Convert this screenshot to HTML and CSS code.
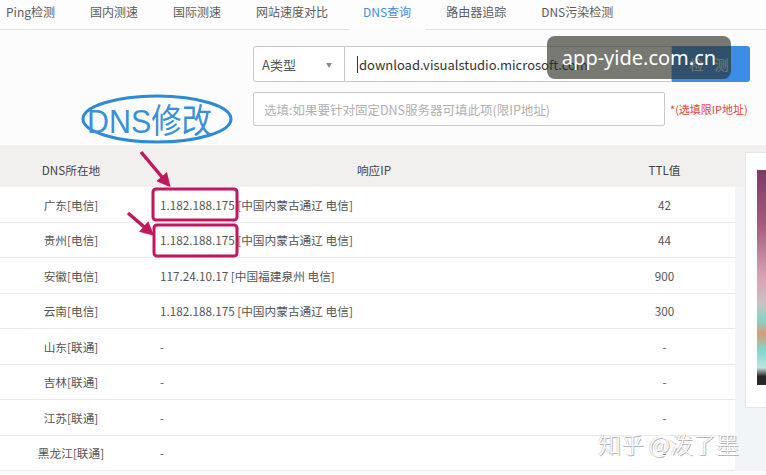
FILE: index.html
```html
<!DOCTYPE html>
<html lang="zh-CN">
<head>
  <meta charset="UTF-8" />
  <meta name="viewport" content="width=device-width, initial-scale=1.0"/>
  <title>DNS查询</title>
  <link rel="stylesheet" href="styles.css">
</head>
<body>
  <nav class="tabs">
    <a class="tab">Ping检测</a>
    <a class="tab">国内测速</a>
    <a class="tab">国际测速</a>
    <a class="tab">网站速度对比</a>
    <a class="tab active">DNS查询</a>
    <a class="tab">路由器追踪</a>
    <a class="tab">DNS污染检测</a>
  </nav>

  <form class="query">
    <div class="query-row">
      <div class="select">A类型<span class="caret">▼</span></div>
      <div class="domain"><span class="cursor"></span>download.visualstudio.microsoft.com</div>
      <button type="button" class="btn">检 测</button>
    </div>
    <div class="query-row">
      <div class="server">选填:如果要针对固定DNS服务器可填此项(限IP地址)</div>
      <span class="hint">*(选填限IP地址)</span>
    </div>
  </form>

  <div class="content">
    <div class="result">
      <div class="result-head">
        <div class="col-loc">DNS所在地</div>
        <div class="col-ip">响应IP</div>
        <div class="col-ttl">TTL值</div>
      </div>
      <div class="result-row">
        <div class="col-loc">广东[电信]</div>
        <div class="col-ip">1.182.188.175 [中国内蒙古通辽 电信]</div>
        <div class="col-ttl">42</div>
      </div>
      <div class="result-row">
        <div class="col-loc">贵州[电信]</div>
        <div class="col-ip">1.182.188.175 [中国内蒙古通辽 电信]</div>
        <div class="col-ttl">44</div>
      </div>
      <div class="result-row">
        <div class="col-loc">安徽[电信]</div>
        <div class="col-ip">117.24.10.17 [中国福建泉州 电信]</div>
        <div class="col-ttl">900</div>
      </div>
      <div class="result-row">
        <div class="col-loc">云南[电信]</div>
        <div class="col-ip">1.182.188.175 [中国内蒙古通辽 电信]</div>
        <div class="col-ttl">300</div>
      </div>
      <div class="result-row">
        <div class="col-loc">山东[联通]</div>
        <div class="col-ip">-</div>
        <div class="col-ttl">-</div>
      </div>
      <div class="result-row">
        <div class="col-loc">吉林[联通]</div>
        <div class="col-ip">-</div>
        <div class="col-ttl">-</div>
      </div>
      <div class="result-row">
        <div class="col-loc">江苏[联通]</div>
        <div class="col-ip">-</div>
        <div class="col-ttl">-</div>
      </div>
      <div class="result-row">
        <div class="col-loc">黑龙江[联通]</div>
        <div class="col-ip">-</div>
        <div class="col-ttl">-</div>
      </div>
    </div>
    <aside class="side">
      <div class="side-pic"></div>
    </aside>
  </div>

  <!-- hand-drawn notes on top of the result table -->
  <svg class="marks" width="766" height="475" viewBox="0 0 766 475">
    <defs>
      <marker id="head" viewBox="0 0 10 10" refX="6" refY="5" markerWidth="4" markerHeight="4" orient="auto">
        <path d="M0 0 L10 5 L0 10 z" fill="#c0175d"/>
      </marker>
    </defs>
    <ellipse cx="157" cy="119" rx="74" ry="23" fill="none" stroke="#2d8ad9" stroke-width="3"/>
    <text x="87" y="133" font-size="34" fill="#3a8fdc" textLength="125" lengthAdjust="spacingAndGlyphs" class="marks-text">DNS修改</text>
    <line x1="141" y1="152" x2="167" y2="183" stroke="#c0175d" stroke-width="3.5" marker-end="url(#head)"/>
    <line x1="128" y1="213" x2="150" y2="232" stroke="#c0175d" stroke-width="3.5" marker-end="url(#head)"/>
    <rect x="153" y="189" width="84" height="31" rx="3" fill="none" stroke="#c0175d" stroke-width="3"/>
    <rect x="154" y="225" width="83" height="31" rx="3" fill="none" stroke="#c0175d" stroke-width="3"/>
  </svg>

  <div class="stamp">app-yide.com.cn</div>
  <div class="credit">知乎 @泼了墨</div>
</body>
</html>
```

FILE: styles.css
```css
html, body {
  overflow: hidden;
}
body {
  font-family: "Noto Sans CJK SC", "Noto Sans", sans-serif;
  background-color: #fcfcfc;
  color: #555;
  margin: 0;
  padding: 0;
  position: relative;
  width: 766px;
  height: 475px;
}

/* tool tabs */
.tabs {
  display: flex;
  gap: 7px;
  height: 29px;
  border-bottom: 1px solid #e2e2e2;
  background-color: #fdfdfd;
}
.tab {
  padding: 4px 14px 0;
  font-size: 12px;
  line-height: 16px;
  color: #5c5c5c;
}
.tab:first-child {
  padding-left: 6px;
}
.tab.active {
  color: #3d8ee0;
  border-bottom: 1px solid #fdfdfd;
  margin-bottom: -1px;
}

/* query form */
.query {
  padding: 16px 0 0 253px;
  margin: 0;
}
.query-row {
  display: flex;
  align-items: center;
}
.query-row + .query-row {
  margin-top: 10px;
}
.select {
  box-sizing: border-box;
  width: 92px;
  height: 36px;
  border: 1px solid #c9c9c9;
  border-radius: 3px 0 0 3px;
  background-color: #fff;
  display: flex;
  align-items: center;
  padding-left: 8px;
  font-size: 13px;
  color: #555;
}
.caret {
  margin-left: auto;
  margin-right: 12px;
  font-size: 6px;
  color: #888;
}
.domain {
  box-sizing: border-box;
  width: 327px;
  height: 36px;
  border: 1px solid #c9c9c9;
  border-left: none;
  background-color: #fff;
  display: flex;
  align-items: center;
  padding-left: 12px;
  font-size: 13px;
  color: #333;
  white-space: nowrap;
  overflow: hidden;
}
.cursor {
  width: 1px;
  height: 17px;
  background-color: #333;
  margin-right: 1px;
}
.btn {
  width: 78px;
  height: 36px;
  border: none;
  border-radius: 0 3px 3px 0;
  background-color: #3a8ee6;
  color: #fff;
  font-family: inherit;
  font-size: 14px;
  letter-spacing: 4px;
}
.server {
  box-sizing: border-box;
  width: 412px;
  height: 34px;
  border: 1px solid #c9c9c9;
  border-radius: 2px;
  background-color: #fff;
  display: flex;
  align-items: center;
  padding-left: 10px;
  font-size: 12.5px;
  color: #b0b0b0;
}
.hint {
  margin-left: 5px;
  font-size: 11px;
  color: #e2463d;
}

/* results */
.content {
  display: flex;
  gap: 10px;
  margin-top: 19px;
  background: linear-gradient(#f1f0ef 0, #f1f0ef 42px, #f2f5f7 42px);
}
.result {
  flex: none;
  width: 735px;
  background-color: #fff;
}
.result-head,
.result-row {
  display: grid;
  grid-template-columns: 152px 452px 131px;
  align-items: center;
  font-size: 11.7px;
}
.result-head {
  height: 42px;
  padding-top: 6px;
  box-sizing: border-box;
  background-color: #f1f0ef;
  color: #444;
}
.result-row {
  height: 35.5px;
  box-sizing: border-box;
  border-bottom: 1px solid #ebebeb;
}
.col-loc {
  text-align: center;
  padding-right: 10px;
}
.col-ip {
  padding-left: 8px;
}
.result-head .col-ip {
  text-align: center;
  padding-left: 0;
  padding-right: 8px;
}
.col-ttl {
  text-align: center;
  padding-right: 10px;
}
.side {
  flex: none;
  width: 150px;
  height: 256px;
  margin-top: 7px;
  box-sizing: border-box;
  border: 1px solid #e2e9ee;
  background-color: #fff;
  padding: 17px 0 0 11px;
}
.side-pic {
  width: 120px;
  height: 215px;
  background: linear-gradient(#7e3a62 0%, #a45a7d 25%, #d9a3b3 50%, #c9c0c4 62%, #86d3c8 70%, #d79b7c 76%, #7fd8cf 84%, #bfe3dc 92%, #262626 96%, #2a2a2a 100%);
}

/* overlays */
.marks {
  position: absolute;
  top: 0;
  left: 0;
  pointer-events: none;
}
.marks-text {
  font-family: "Liberation Sans", "Noto Sans CJK SC", sans-serif;
}
.stamp {
  position: absolute;
  left: 547px;
  top: 36px;
  width: 184px;
  height: 43px;
  border-radius: 8px;
  background-color: rgba(44, 46, 34, 0.64);
  color: #fff;
  font-family: "Noto Sans", sans-serif;
  font-size: 20px;
  line-height: 43px;
  text-align: center;
}
.credit {
  position: absolute;
  left: 598px;
  top: 426px;
  font-size: 23px;
  font-weight: 300;
  color: #fbfbfb;
  text-shadow: 1px 1px 0 #b4b4b4, -1px 0 0 #d8d8d8;
}
```
